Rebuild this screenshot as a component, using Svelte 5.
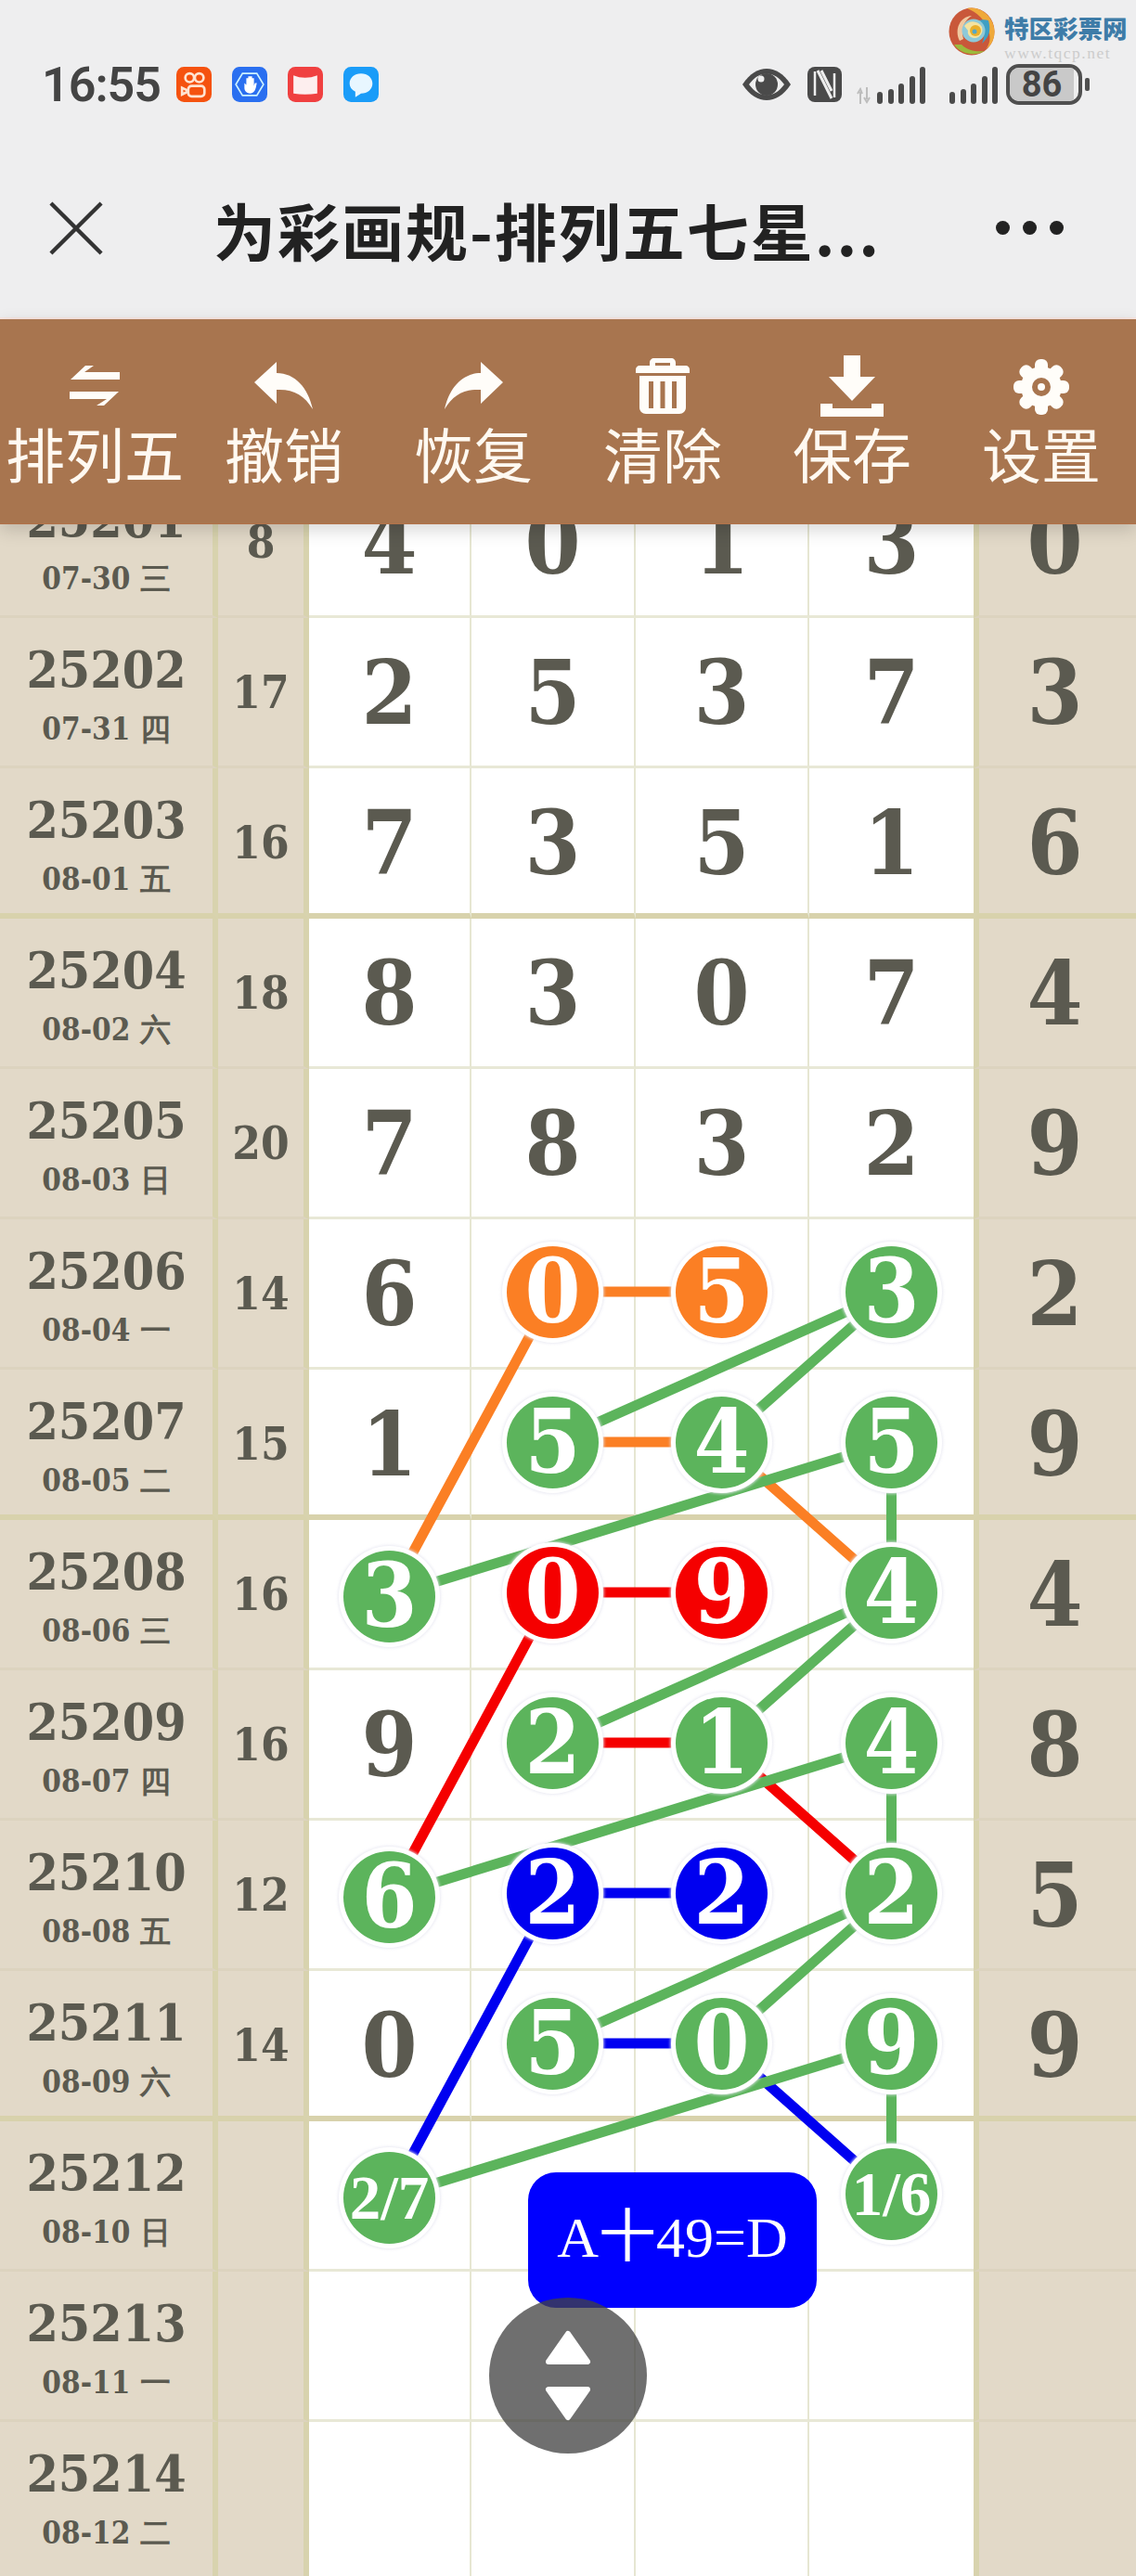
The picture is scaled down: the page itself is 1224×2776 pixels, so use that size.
<script>
  // Draw results: period, date, weekday, sum, four positions, last digit.
  // A position is either a plain digit or [value, colour] for a marked ball.
  const g = 'g', o = 'o', r = 'r', b = 'b';
  const rows = [
    ['25201', '07-30 三', '8', ['4', '0', '1', '3'], '0'],
    ['25202', '07-31 四', '17', ['2', '5', '3', '7'], '3'],
    ['25203', '08-01 五', '16', ['7', '3', '5', '1'], '6'],
    ['25204', '08-02 六', '18', ['8', '3', '0', '7'], '4'],
    ['25205', '08-03 日', '20', ['7', '8', '3', '2'], '9'],
    ['25206', '08-04 一', '14', ['6', ['0', o], ['5', o], ['3', g]], '2'],
    ['25207', '08-05 二', '15', ['1', ['5', g], ['4', g], ['5', g]], '9'],
    ['25208', '08-06 三', '16', [['3', g], ['0', r], ['9', r], ['4', g]], '4'],
    ['25209', '08-07 四', '16', ['9', ['2', g], ['1', g], ['4', g]], '8'],
    ['25210', '08-08 五', '12', [['6', g], ['2', b], ['2', b], ['2', g]], '5'],
    ['25211', '08-09 六', '14', ['0', ['5', g], ['0', g], ['9', g]], '9'],
    ['25212', '08-10 日', '', [['2/7', g], '', '', ['1/6', g]], ''],
    ['25213', '08-11 一', '', ['', '', '', ''], ''],
    ['25214', '08-12 二', '', ['', '', '', ''], '']
  ];

  const colX = [419.5, 596.5, 777.5, 960.5];
  const stroke = { g: '#5cb45c', o: '#fb7f24', r: '#f50000', b: '#0000f0' };
  // Ball centre in the coordinates of the table
  const px = (row, col) => colX[col];
  const py = (row, col) => row * 162 + 78 + (col === 0 ? 4 : 0);

  // Links between balls: [colour, row, col, row, col]
  const links = [
    [g, 5, 3, 6, 1], [g, 5, 3, 6, 2], [o, 5, 1, 5, 2], [o, 5, 1, 7, 0],
    [o, 6, 2, 7, 3], [o, 6, 1, 6, 2], [g, 6, 3, 7, 0], [g, 6, 3, 7, 3],
    [r, 7, 1, 7, 2], [r, 7, 1, 9, 0], [g, 7, 3, 8, 1],
    [g, 7, 3, 8, 2], [r, 8, 1, 8, 2], [r, 8, 2, 9, 3], [g, 8, 3, 9, 0],
    [g, 8, 3, 9, 3], [b, 9, 1, 9, 2], [b, 9, 1, 11, 0], [g, 9, 3, 10, 1],
    [g, 9, 3, 10, 2], [b, 10, 1, 10, 2], [b, 10, 2, 11, 3], [g, 10, 3, 11, 0],
    [g, 10, 3, 11, 3]
  ];

  const navItems = ['排列五', '撤销', '恢复', '清除', '保存', '设置'];
  const teeth = [0, 45, 90, 135];
  const bars = [13, 16, 22, 30, 40];
</script>

<div class="screen">
  <header class="top">
    <div class="status">
      <div class="status-left">
        <span class="time">16:55</span>
        <svg class="app" viewBox="0 0 37 37">
          <rect width="37" height="37" rx="8" fill="#f5520f" />
          <g fill="none" stroke="#ffe4d2" stroke-width="2.6">
            <circle cx="14" cy="11.5" r="4.6" /><circle cx="24" cy="11.5" r="4.6" />
            <rect x="12.5" y="20" width="17" height="11" rx="3.5" />
            <path d="M12 25l-6-3v7l6-3" />
          </g>
        </svg>
        <svg class="app" viewBox="0 0 37 37">
          <rect width="37" height="37" rx="8" fill="#2a6ff0" />
          <path d="M11 7h15l7 11.500-7 11.500h-15l-7-11.500z" fill="none" stroke="#cdf3ff" stroke-width="1.600" />
          <path d="M13 17v5c0 4 3 6 6 6s5-2 6-6l1-5h-2l-1 3v-8h-2v6v-8h-2v8v-8h-2v8v-6h-2v7z" fill="#fff" />
        </svg>
        <svg class="app" viewBox="0 0 37 37">
          <rect width="37" height="37" rx="8" fill="#f04040" />
          <path d="M6 9q12 5 25 0v19q-13 2-25 0z" fill="#fdeeee" />
        </svg>
        <svg class="app" viewBox="0 0 37 37">
          <rect width="37" height="37" rx="8" fill="#1a9cf8" />
          <path d="M18.500 7c7 0 12 4.500 12 10.500s-5 10.500-12 10.500l-6 4v-6c-4-2-6-5-6-8.500 0-6 5-10.500 12-10.500z" fill="#e8f6ff" />
        </svg>
      </div>
      <div class="status-right">
        <svg class="eye" viewBox="0 0 54 36">
          <path d="M1 18C9 6 18 1 27 1s18 5 26 17c-8 12-17 17-26 17S9 30 1 18z" fill="#4a4a4a" />
          <path d="M8 18c6-8 12-11.500 19-11.500s13 3.500 19 11.500c-6 8-12 11.500-19 11.500S14 26 8 18z" fill="#eee" />
          <circle cx="27" cy="18" r="12" fill="#4a4a4a" />
          <circle cx="21" cy="12" r="3.500" fill="#eee" />
        </svg>
        <svg class="nfc" viewBox="0 0 37 38">
          <rect width="37" height="38" rx="8" fill="#4a4a4a" />
          <path d="M8 5v26M29 7v26" stroke="#eee" stroke-width="2.500" fill="none" />
          <path d="M11 4l15 30M15 4l11 22" stroke="#eee" stroke-width="3" fill="none" />
        </svg>
        <div class="signal first">
          <svg class="updown" width="16" height="18" viewBox="0 0 16 18">
            <path d="M4 18V5M1 7l3-5 2 5M11 0v13M8 11l3 5 3-5" fill="none" stroke="#bdbdbd" stroke-width="2" />
          </svg>
          {#each bars as h}<i style="height:{h}px"></i>{/each}
        </div>
        <div class="signal">
          {#each bars as h}<i style="height:{h}px"></i>{/each}
        </div>
        <div class="battery">
          <div class="charge">86</div>
        </div>
        <span class="tip"></span>
      </div>
    </div>
    <div class="titlebar">
      <svg class="close" viewBox="0 0 60 60"><path d="M2 2l56 56M58 2L2 58" /></svg>
      <h1>为彩画规-排列五七星...</h1>
      <div class="more"><i></i><i></i><i></i></div>
    </div>
    <div class="mark">
      <svg class="swirl" viewBox="0 0 50 52">
        <ellipse cx="25" cy="26" rx="24.500" ry="25.500" fill="#c9583a" />
        <path d="M20 1C36-2 49.500 12 49.500 26c0 8-3 14-9 19 4-6 5-12 3-19C40 13 30 5 20 1z" fill="#efa93a" />
        <path d="M6 40c6 9 21 14 33 7-8 1-18 0-25-7z" fill="#9cba3c" />
        <path d="M43 14c3 10 1 18-7 25 4-8 3-17-5-24 4-2 8-2 12-1z" fill="#3e9fc4" />
        <path d="M12 36C6 24 12 10 25 9c-8 5-12 14-9 25z" fill="#f0c9a0" />
        <circle cx="27" cy="25" r="12.500" fill="#8ec9d8" />
        <path d="M17 20c5-7 15-6 19 1 2 6-2 12-8 12-5 0-8-4-7-8z" fill="#f4e3a0" />
        <circle cx="29" cy="25" r="6" fill="#e9b02c" />
        <circle cx="28" cy="26" r="2.500" fill="#55a8c8" />
      </svg>
      <div class="mark-text">
        <strong>特区彩票网</strong>
        <span>www.tqcp.net</span>
      </div>
    </div>
  </header>

  <nav class="toolbar">
    {#each navItems as label, i}
      <div class="tool">
        <div class="glyph">
          {#if i === 0}
            <svg width="54" height="44" viewBox="0 0 54 44">
              <path d="M1 15L17 0h9L16 7h38v8zM53 28L37 43h-8l11-7H0v-8z" />
            </svg>
          {:else if i === 1}
            <svg width="64" height="52" viewBox="0 0 64 52">
              <path d="M0 22L24 0v12c20 0 34 16 39 39-9-15-21-22-39-21v15z" />
            </svg>
          {:else if i === 2}
            <svg class="flip" width="64" height="52" viewBox="0 0 64 52">
              <path d="M0 22L24 0v12c20 0 34 16 39 39-9-15-21-22-39-21v15z" />
            </svg>
          {:else if i === 3}
            <svg width="58" height="60" viewBox="0 0 58 60">
              <path d="M15 8V5c0-3 2-5 5-5h18c3 0 5 2 5 5v3h11c2 0 4 2 4 4v4H0v-4c0-2 2-4 4-4zM21 8h16V5H21z" fill-rule="evenodd" />
              <path d="M4 19h50v34c0 4-3 7-7 7H11c-4 0-7-3-7-7zM14 25v29h5V25zM26.500 25v29h5V25zM39 25v29h5V25z" fill-rule="evenodd" />
            </svg>
          {:else if i === 4}
            <svg width="68" height="66" viewBox="0 0 68 66">
              <path d="M25 0h18v23h16L34 49 9 23h16zM0 52h13v5h42v-5h13v14H0z" />
            </svg>
          {:else}
            <svg class="gear" width="60" height="60" viewBox="-30 -30 60 60">
              {#each teeth as t}
                <rect x="-7" y="-30" width="14" height="60" rx="6" transform="rotate({t})" />
              {/each}
              <circle r="22" />
              <circle r="10" class="hole" />
              <circle r="4" />
            </svg>
          {/if}
        </div>
        <span class="label">{label}</span>
      </div>
    {/each}
  </nav>

  <main class="table">
    <svg class="links" width="1224" height="2273" viewBox="0 0 1224 2273">
      {#each links as [c, r1, c1, r2, c2]}
        <line x1={px(r1, c1)} y1={py(r1, c1)} x2={px(r2, c2)} y2={py(r2, c2)} stroke={stroke[c]} stroke-width="11" />
      {/each}
    </svg>
    {#each rows as [no, date, sum, cells, last], ri}
      <div class="row" class:heavy={ri % 4 === 2} class:tail={ri === rows.length - 1}>
        <div class="cell period">
          <span class="no">{no}</span>
          <span class="date">{date}</span>
        </div>
        <div class="cell sum">{sum}</div>
        {#each cells as v, ci}
          <div class="cell pos">
            {#if Array.isArray(v)}
              <span class="ball {v[1]}" class:low={ci === 0} class:pair={v[0].length > 1}>{v[0]}</span>
            {:else}
              {v}
            {/if}
          </div>
        {/each}
        <div class="cell last">{last}</div>
      </div>
    {/each}
    <div class="formula">A十49=D</div>
    <div class="scroller">
      <svg width="54" height="98" viewBox="0 0 54 98">
        <path d="M27 4L48 34H6zM6 64h42L27 94z" />
      </svg>
    </div>
  </main>
</div>

<style>
  :global(body) { margin: 0; background: #fff; }
  .screen { width: 1224px; height: 2776px; overflow: hidden; position: relative; font-family: "Noto Sans CJK SC", sans-serif; }

  .top { height: 342px; background: #eeeeef; position: relative; border-bottom: 2px solid #f8e6e2; }
  .status { height: 44px; padding: 69px 50px 35px 45px; display: flex; justify-content: space-between; align-items: center; }
  .status-left { display: flex; align-items: center; gap: 22px; }
  .time { font: 600 52px Roboto, sans-serif; color: #444; width: 123px; letter-spacing: -1px; white-space: nowrap; }
  .app { width: 38px; height: 38px; display: block; }
  .status-right { display: flex; align-items: center; }
  .eye { width: 54px; height: 36px; }
  .nfc { width: 37px; height: 38px; margin-left: 17px; }
  .signal { display: flex; align-items: flex-end; gap: 5.500px; height: 40px; margin-left: 38px; position: relative; padding-top: 2px; }
  .signal i { width: 6px; background: #4a4a4a; border-radius: 3px; }
  .updown { position: absolute; left: -22px; bottom: 0; }
  .signal + .signal { margin-left: 26px; }
  .battery { width: 74px; height: 36px; margin-left: 9px; border: 4px solid #4f4f4f; border-radius: 14px; overflow: hidden; background: #eee; }
  .charge { width: 69px; height: 36px; background: #c9c9c9; font: 700 38px/36px Roboto, sans-serif; color: #444; text-align: center; }
  .tip { width: 5px; height: 14px; background: #4f4f4f; border-radius: 2px; margin-left: 3px; }

  .titlebar { height: 196px; display: flex; align-items: center; position: relative; }
  .close { width: 58px; height: 58px; margin-left: 53px; fill: none; stroke: #333; stroke-width: 4.500px; }
  h1 { margin: 0 0 0 119px; font: 700 67px/1 "Noto Sans CJK SC", sans-serif; color: #222; white-space: nowrap; letter-spacing: 2px; }
  .more { position: absolute; left: 1073px; top: 90px; display: flex; gap: 14px; }
  .more i { width: 15px; height: 15px; border-radius: 50%; background: #222; }

  .mark { position: absolute; left: 1022px; top: 8px; display: flex; gap: 10px; }
  .swirl { width: 50px; height: 52px; display: block; }
  .mark-text { display: flex; flex-direction: column; padding-top: 8px; }
  .mark-text strong { font: 900 26.500px/27px "Noto Sans CJK SC", sans-serif; color: #3e7ca8; white-space: nowrap; }
  .mark-text span { font: 17.500px/20px "Liberation Serif", serif; color: #ccc; letter-spacing: 1.500px; white-space: nowrap; margin-top: 4px; }

  .toolbar { position: relative; z-index: 5; height: 221px; background: #a8754f; border-bottom: 1px solid #b2724a; box-sizing: border-box; display: grid; grid-template-columns: repeat(6, 204px); box-shadow: 0 6px 18px rgba(0, 0, 0, .16); }
  .tool { display: flex; flex-direction: column; align-items: center; color: #fff9f1; }
  .glyph { height: 66px; margin-top: 39px; width: 100%; display: flex; justify-content: center; align-items: center; }
  .glyph svg { fill: #fffdf9; display: block; }
  .glyph .flip { transform: scaleX(-1); }
  .glyph .gear { margin-top: 2px; }
  .glyph .hole { fill: #a8754f; }
  .label { font: 400 64px/1 "Noto Sans CJK SC", sans-serif; margin-top: 6px; white-space: nowrap; }

  .table { position: relative; margin-top: -61px; color: #5b5a50; font-family: "DejaVu Serif", serif; font-weight: 700; font-stretch: condensed; }
  .links { position: absolute; left: 0; top: 0; z-index: 1; }
  .row { display: grid; grid-template-columns: 235px 98px 175px 177px 187px 177px 175px; height: 162px; }
  .row.tail { height: 170px; }
  .cell { box-sizing: border-box; border-bottom: 3px solid #e8e8d6; display: flex; align-items: center; justify-content: center; padding-top: 2px; font-size: 96px; line-height: 1; }
  .heavy .cell { border-bottom: 6px solid #d8d2ac; padding-top: 5px; }
  .tail .cell { border-bottom: 0; }
  .cell.period, .cell.sum, .cell.last { background: #e2d9c8; border-bottom-color: #dcd3bf; }
  .heavy .cell.period, .heavy .cell.sum, .heavy .cell.last { border-bottom-color: #d8d2ac; }
  .cell.period, .heavy .cell.period { flex-direction: column; border-right: 6px solid #d8d3ae; padding: 0; justify-content: flex-start; }
  .no { font-size: 55px; line-height: 1; margin-top: 28px; }
  .date { font-size: 33px; line-height: 1; margin-top: 20px; }
  .sum { font-size: 49px; border-right: 6px solid #d8d3ae; }
  .pos { background: #fff; border-right: 2px solid #e6e6d2; }
  .pos:nth-child(6) { border-right: 0; }
  .last { border-left: 6px solid #d8d3ae; padding-right: 6px; }

  .ball { position: relative; z-index: 2; width: 99px; height: 99px; margin-bottom: 5px; border-radius: 50%; display: flex; align-items: center; justify-content: center; color: #fff; box-shadow: 0 0 0 5px #fff, 0 0 3px 6px rgba(230, 230, 240, .8); }
  .ball.low { margin-top: 8px; margin-bottom: 5px; }
  .ball.pair { font: 700 67px/1 "Liberation Serif", serif; }
  .g { background: #5cb45c; }
  .o { background: #fb7f24; }
  .r { background: #f50000; }
  .b { background: #0000f0; }

  .formula { position: absolute; z-index: 3; left: 569px; top: 1837px; width: 311px; height: 146px; padding-bottom: 6px; box-sizing: border-box; border-radius: 30px; background: #0000ff; color: #fff; display: flex; align-items: center; justify-content: center; font: 400 62px/1 "Liberation Serif", "Noto Sans CJK SC", serif; }
  .scroller { position: absolute; z-index: 4; left: 527px; top: 1972px; width: 170px; height: 168px; border-radius: 50%; background: rgba(66, 66, 66, .76); display: flex; align-items: center; justify-content: center; }
  .scroller svg { fill: #fff; stroke: #fff; stroke-width: 6px; stroke-linejoin: round; }
</style>
